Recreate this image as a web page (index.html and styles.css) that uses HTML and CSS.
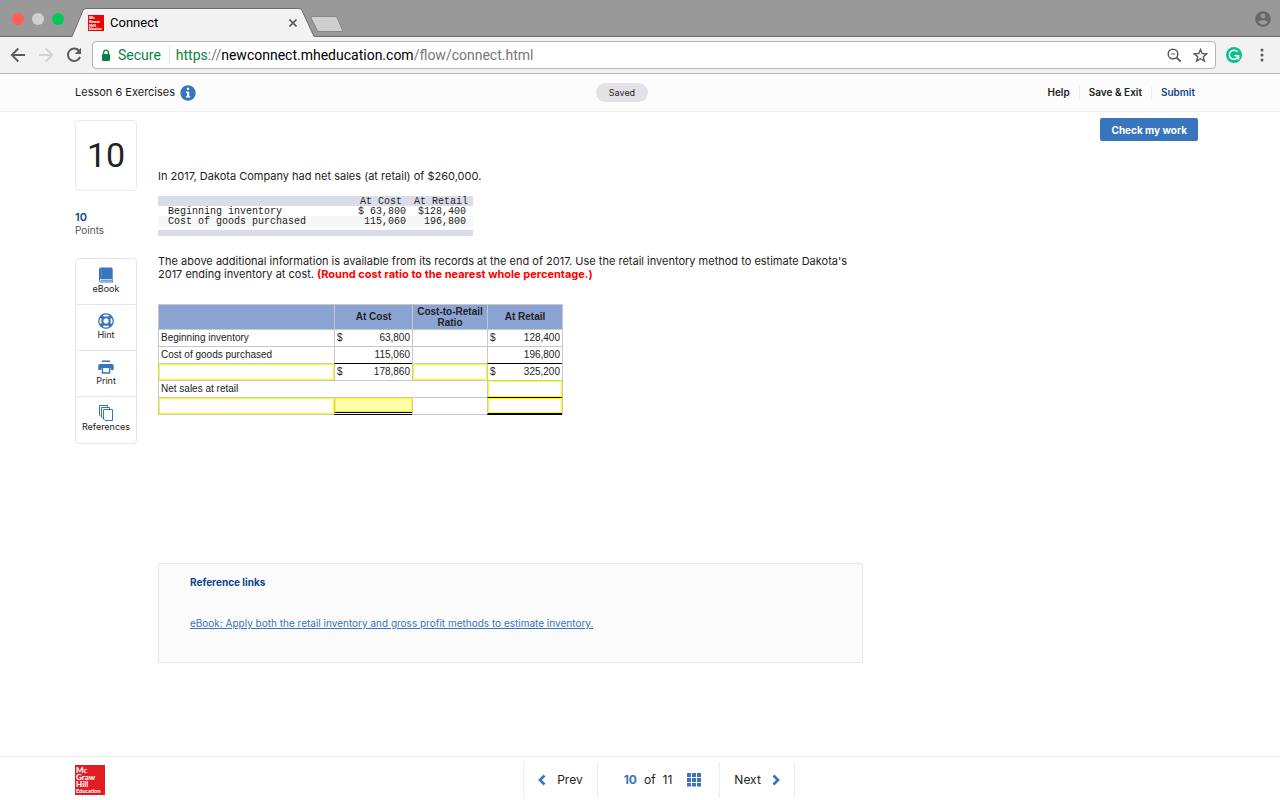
FILE: index.html
```
<!DOCTYPE html>
<html lang="en">
<head>
    <meta charset="UTF-8">
    <meta name="viewport" content="width=device-width, initial-scale=1.0">
    <title>Connect</title>
    <link rel="stylesheet" href="styles.css">
</head>
<body>
    <!-- Browser chrome -->
    <div class="tab-strip">
        <div class="lights">
            <span class="light red"></span>
            <span class="light grey"></span>
            <span class="light green"></span>
        </div>
        <div class="tab">
            <svg class="tab-shape" width="244" height="29" viewBox="0 0 244 29">
                <path d="M0 28.500L11 2.500Q12 .5 14 .5H227Q229 .5 230 2.500L242 28.500V29H0Z" fill="#f2f2f2"/>
                <path d="M0 28.500L11 2.500Q12 .5 14 .5H227Q229 .5 230 2.500L242 28.500" fill="none" stroke="#6e6e6e"/>
            </svg>
            <svg class="favicon" width="16" height="16" viewBox="0 0 16 16">
                <rect width="16" height="16" fill="#f20000"/>
                <g fill="#fff" font-family="Open Sans, sans-serif" font-weight="800" font-size="4">
                    <text x="1" y="4">Mc</text>
                    <text x="1" y="8">Graw</text>
                    <text x="1" y="12">Hill</text>
                    <text x="1" y="15" font-size="2.500">Education</text>
                </g>
            </svg>
            <span class="tab-title">Connect</span>
            <button class="icon-btn" aria-label="Close tab">
                <svg width="8" height="8" viewBox="0 0 8 8"><path d="M.5 .5L7.500 7.500M7.500 .5L.5 7.500" stroke="#5a5a5a" stroke-width="1.600"/></svg>
            </button>
        </div>
        <button class="icon-btn new-tab" aria-label="New tab">
            <svg width="34" height="17" viewBox="0 0 34 17"><path d="M2.500 .5H25Q26.500 .5 27.300 2L32.500 14Q33 15.500 31.500 15.500H9Q7.500 15.500 7 14L1 2Q.6 .5 2.500 .5Z" fill="#cfcfcf" stroke="#858585"/></svg>
        </button>
        <button class="icon-btn profile" aria-label="Profile">
            <svg width="16" height="16" viewBox="0 0 16 16"><circle cx="8" cy="8" r="7.800" fill="#676767"/><circle cx="8" cy="5" r="2.400" fill="#999"/><path d="M3.200 11C4 8.500 12 8.500 12.800 11C11.500 13 9.700 13.700 8 13.700S4.500 13 3.200 11Z" fill="#999"/></svg>
        </button>
    </div>
    <div class="toolbar">
        <button class="icon-btn" aria-label="Back">
            <svg width="16" height="16" viewBox="0 0 16 16"><path d="M15 8H2M8.300 1.500L1.800 8L8.300 14.500" fill="none" stroke="#5c5c5c" stroke-width="1.900"/></svg>
        </button>
        <button class="icon-btn" aria-label="Forward">
            <svg width="16" height="16" viewBox="0 0 16 16"><path d="M1 8H14M7.700 1.500L14.200 8L7.700 14.500" fill="none" stroke="#d2d2d2" stroke-width="1.900"/></svg>
        </button>
        <button class="icon-btn" aria-label="Reload">
            <svg width="16" height="16" viewBox="0 0 16 16"><path d="M13.200 4.200A6.200 6.200 0 1 0 14 9.800" fill="none" stroke="#5c5c5c" stroke-width="2"/><path d="M15 .8V7H8.800Z" fill="#5c5c5c"/></svg>
        </button>
        <div class="omnibox">
            <svg width="10" height="13" viewBox="0 0 10 13"><rect x="1" y="5" width="8" height="7" rx=".8" fill="#0b8043"/><path d="M2.700 5.500V3.500A2.300 2.300 0 0 1 7.300 3.500V5.500" fill="none" stroke="#0b8043" stroke-width="1.300"/></svg>
            <span class="secure">Secure</span>
            <div class="url" role="textbox" aria-label="Address"><span class="scheme">https</span><span class="dim">://</span>newconnect.mheducation.com<span class="dim">/flow/connect.html</span></div>
            <button class="icon-btn" aria-label="Zoom">
                <svg width="15" height="15" viewBox="0 0 15 15"><g fill="none" stroke="#5c5c5c"><circle cx="6" cy="6" r="4.800" stroke-width="1.500"/><path d="M9.500 9.500L13.700 13.700" stroke-width="1.900"/><path d="M3.800 6H8.200"/></g></svg>
            </button>
            <button class="icon-btn" aria-label="Bookmark">
                <svg width="15" height="15" viewBox="0 0 15 15"><path d="M7.500 1.500L9.200 5.500L13.600 5.900L10.300 8.700L11.300 13L7.500 10.700L3.700 13L4.700 8.700L1.400 5.900L5.800 5.500Z" fill="none" stroke="#5c5c5c" stroke-width="1.400"/></svg>
            </button>
        </div>
        <button class="icon-btn" aria-label="Grammarly">
            <svg width="16" height="16" viewBox="0 0 16 16"><circle cx="8" cy="8" r="8" fill="#0bc18d"/><path d="M11.500 4.800A4.600 4.600 0 1 0 12.300 9.300" fill="none" stroke="#fff" stroke-width="1.500"/><path d="M8.500 8.800H12.500V12.500" fill="none" stroke="#fff" stroke-width="1.500"/></svg>
        </button>
        <button class="icon-btn menu" aria-label="Menu">
            <svg width="4" height="14" viewBox="0 0 4 14" fill="#5c5c5c"><circle cx="2" cy="2" r="1.500"/><circle cx="2" cy="7" r="1.500"/><circle cx="2" cy="12" r="1.500"/></svg>
        </button>
    </div>

    <!-- Assignment page -->
    <header class="page-header">
        <div class="lesson">
            Lesson 6 Exercises
            <button class="icon-btn" aria-label="Assignment info">
                <svg width="16" height="16" viewBox="0 0 16 16"><circle cx="8" cy="8" r="7.700" fill="#3875bc"/><path d="M6.900 2.800H9.100V5H6.900ZM6 6.500H9.200V11.200H10.200V12.600H5.900V11.200H7V7.900H6Z" fill="#fff"/></svg>
            </button>
        </div>
        <span class="saved">Saved</span>
        <nav class="header-links">
            <a href="#">Help</a>
            <a href="#">Save &amp; Exit</a>
            <a href="#" class="submit">Submit</a>
        </nav>
    </header>

    <main class="page">
        <aside class="rail">
            <div class="question-number">10</div>
            <div class="points"><b>10</b>Points</div>
            <div class="tools">
                <a href="#">
                    <svg width="16" height="16" viewBox="0 0 16 16"><path d="M3 .5H14V12H3Q1.800 12 1.800 13.200T3 14.500H14.300V1.500H15V15.500H3Q1 15.500 1 13.500V2.500Q1 .5 3 .5Z" fill="#3875bc"/><path d="M3 13.200H14" stroke="#3875bc"/><path d="M3.500 1V12" stroke="#6b9ace" stroke-width=".6"/></svg>
                    eBook
                </a>
                <a href="#">
                    <svg width="16" height="16" viewBox="0 0 16 16"><circle cx="8" cy="8" r="5.200" fill="none" stroke="#3875bc" stroke-width="4.800"/><path d="M5.300 2.600A6 6 0 0 1 10.700 2.600M13.400 5.300A6 6 0 0 1 13.400 10.700M10.700 13.400A6 6 0 0 1 5.300 13.400M2.600 10.700A6 6 0 0 1 2.600 5.300" fill="none" stroke="#fff" stroke-width="2.600"/><circle cx="8" cy="8" r="7.200" fill="none" stroke="#3875bc" stroke-width="1.200"/><circle cx="8" cy="8" r="3.500" fill="none" stroke="#3875bc" stroke-width="1.200"/></svg>
                    Hint
                </a>
                <a href="#">
                    <svg width="16" height="16" viewBox="0 0 16 16"><path d="M4 1.500H12V3H4ZM2 5H14Q15.700 5 15.700 6.700V11H12.700V9H3.300V11H.3V6.700Q.3 5 2 5Z" fill="#3875bc"/><path d="M4.400 9V14H11.600V9" fill="none" stroke="#3875bc" stroke-width="1.400"/></svg>
                    Print
                </a>
                <a href="#">
                    <svg width="16" height="16" viewBox="0 0 16 16"><g fill="#fff" stroke="#3875bc"><path d="M1.500 .5H9.500V11.500H3L1.500 10Z"/><path d="M3.500 2.500H11.500V13.500H5L3.500 12Z"/><path d="M5.500 4.500H14.500V15.500H7L5.500 14Z"/></g></svg>
                    References
                </a>
            </div>
        </aside>

        <section class="question">
            <p>In 2017, Dakota Company had net sales (at retail) of $260,000.</p>

            <table class="facts">
                <thead>
                    <tr><th></th><th>At Cost</th><th>At Retail</th></tr>
                </thead>
                <tbody>
                    <tr><td>Beginning inventory</td><td>$ 63,800</td><td>$128,400</td></tr>
                    <tr class="stripe"><td>Cost of goods purchased</td><td>115,060</td><td>196,800</td></tr>
                </tbody>
            </table>

            <p>The above additional information is available from its records at the end of 2017. Use the retail inventory method to estimate Dakota's 2017 ending inventory at cost. <strong>(Round cost ratio to the nearest whole percentage.)</strong></p>

            <table class="answers">
                <colgroup>
                    <col class="col-label"><col class="col-cost"><col class="col-ratio"><col class="col-retail">
                </colgroup>
                <thead>
                    <tr><th></th><th>At Cost</th><th>Cost-to-Retail Ratio</th><th>At Retail</th></tr>
                </thead>
                <tbody>
                    <tr>
                        <td>Beginning inventory</td>
                        <td><div class="money"><span>$</span><span>63,800</span></div></td>
                        <td></td>
                        <td><div class="money"><span>$</span><span>128,400</span></div></td>
                    </tr>
                    <tr>
                        <td>Cost of goods purchased</td>
                        <td class="num">115,060</td>
                        <td></td>
                        <td class="num">196,800</td>
                    </tr>
                    <tr>
                        <td class="entry"><input type="text" aria-label="Total line label"></td>
                        <td class="sum"><div class="money"><span>$</span><span>178,860</span></div></td>
                        <td class="entry"><input type="text" aria-label="Cost-to-retail ratio"></td>
                        <td class="sum"><div class="money"><span>$</span><span>325,200</span></div></td>
                    </tr>
                    <tr>
                        <td colspan="3">Net sales at retail</td>
                        <td class="entry"><input type="text" aria-label="Net sales at retail"></td>
                    </tr>
                    <tr class="last">
                        <td class="entry"><input type="text" aria-label="Ending line label"></td>
                        <td class="entry active"><input type="text" aria-label="Ending inventory at cost"></td>
                        <td></td>
                        <td class="entry total sum"><input type="text" aria-label="Ending inventory at retail"></td>
                    </tr>
                </tbody>
            </table>

            <div class="references">
                <h2>Reference links</h2>
                <a href="#">eBook: Apply both the retail inventory and gross profit methods to estimate inventory.</a>
            </div>
        </section>

        <button class="check-btn">Check my work</button>
    </main>

    <footer class="page-footer">
        <svg width="30" height="30" viewBox="0 0 30 30" role="img" aria-label="McGraw Hill Education">
            <rect width="30" height="30" fill="#e31b23"/>
            <g fill="#fff" font-family="Lato, sans-serif" font-weight="900" font-size="8">
                <text x="1" y="8">Mc</text>
                <text x="1" y="15">Graw</text>
                <text x="1" y="22">Hill</text>
                <text x="1" y="28" font-size="5.500">Education</text>
            </g>
        </svg>
        <nav class="pager">
            <a href="#" class="prev">
                <svg width="8" height="12" viewBox="0 0 8 12"><path d="M6.500 1.500L2 6L6.500 10.500" fill="none" stroke="#3875bc" stroke-width="2.600"/></svg>
                Prev
            </a>
            <div class="position">
                <b>10</b><span>of</span><span>11</span>
                <button class="icon-btn" aria-label="Question list">
                    <svg width="14" height="14" viewBox="0 0 14 14" fill="#3875bc"><path d="M0 0H4V4H0ZM5 0H9V4H5ZM10 0H14V4H10ZM0 5H4V9H0ZM5 5H9V9H5ZM10 5H14V9H10ZM0 10H4V13.500H0ZM5 10H9V13.500H5ZM10 10H14V13.500H10Z"/></svg>
                </button>
            </div>
            <a href="#" class="next">
                Next
                <svg width="8" height="12" viewBox="0 0 8 12"><path d="M1.500 1.500L6 6L1.500 10.500" fill="none" stroke="#3875bc" stroke-width="2.600"/></svg>
            </a>
        </nav>
    </footer>
</body>
</html>
```
FILE: styles.css
```
* { box-sizing: border-box; }
body { font-family: Inter, "Open Sans", sans-serif; font-size: 11px; line-height: 13px; color: #222; background-color: #fff; margin: 0; display: flex; flex-direction: column; min-height: 100vh; }
a { color: inherit; text-decoration: none; }
svg { display: block; flex: none; }
.icon-btn { padding: 0; border: none; background: none; cursor: pointer; flex: none; }

/* browser tabs */
.tab-strip { display: flex; align-items: center; height: 37px; background-color: #999; border-bottom: 1px solid #6e6e6e; padding: 2px 9px 0 12px; font-family: Roboto, sans-serif; }
.lights { display: flex; gap: 8px; }
.light { width: 12px; height: 12px; border-radius: 50%; }
.red { background-color: #ff5f57; }
.grey { background-color: #d0d0d0; }
.green { background-color: #00ca56; }
.tab { position: relative; display: flex; align-items: center; align-self: flex-end; width: 244px; height: 28px; margin-left: 8px; padding: 2px 19px 0 16px; gap: 6px; }
.tab-shape { position: absolute; left: 0; top: 0; }
.favicon, .tab-title, .tab .icon-btn { position: relative; }
.tab-title { flex: 1; font-size: 13px; line-height: 16px; color: #000; }
.new-tab { margin-top: 10px; margin-left: -6px; }
.profile { margin-left: auto; }

/* address bar */
.toolbar { display: flex; align-items: center; gap: 12px; height: 37px; padding: 0 16px 0 10px; background-color: #f2f2f2; border-bottom: 1px solid #b4b4b4; font-family: Roboto, sans-serif; font-size: 14px; line-height: 18px; }
.omnibox { flex: 1; display: flex; align-items: center; height: 28px; margin: 0 -2px; padding: 0 7px 0 8px; background-color: #fff; border: 1px solid #b4b4b4; border-radius: 4px; }
.secure { color: #0b8043; margin-left: 7px; padding-right: 8px; border-right: 1px solid #e5e5e5; }
.url { flex: 1; margin-left: 6px; color: #000; }
.scheme { color: #0b8043; }
.dim { color: #777; }
.omnibox .icon-btn { margin-left: 11px; }
.menu { margin-left: 6px; }

.page-header { display: grid; grid-template-columns: 20fr auto 21fr; align-items: center; height: 38px; padding: 0 85px 0 75px; background-color: #fcfcfc; border-bottom: 1px solid #eee; }
.lesson { display: flex; align-items: center; gap: 5px; }
.saved { font-size: 9px; padding: 3px 13px; border-radius: 10px; background-color: #e4e2e6; }
.header-links { display: flex; justify-content: flex-end; font-size: 10px; font-weight: 600; }
.header-links a { padding: 0 9px; border-right: 1px solid #eee; }
.header-links a:last-child { padding-right: 0; border-right: none; }
.header-links .submit { color: #0f4587; }

.page { flex: 1; display: flex; align-items: flex-start; padding: 6px 82px 20px 75px; }
.rail { flex: none; width: 62px; margin-top: 2px; }
.question-number { display: flex; align-items: center; justify-content: center; height: 71px; border: 1px solid #eaeaea; border-radius: 4px; font-family: Roboto, sans-serif; font-size: 34px; }
.points { margin-top: 20px; font-size: 10px; line-height: 12px; color: #555; }
.points b { display: block; font-weight: 600; font-size: 11px; line-height: 13px; color: #0f4587; }
.tools { margin-top: 22px; border: 1px solid #e6e6e6; border-radius: 4px; }
.tools a { display: flex; flex-direction: column; align-items: center; height: 46px; padding-top: 8px; font-size: 9px; line-height: 12px; border-bottom: 1px solid #e6e6e6; }
.tools a:last-child { border-bottom: none; }

.question { flex: 0 1 705px; margin-left: 21px; padding-top: 52px; }
.question p { margin: 0; }
.question strong { color: #f00; }
.check-btn { margin-left: auto; height: 23px; padding: 0 11px; border: none; border-radius: 2px; background-color: #3875bc; color: #fff; font-family: inherit; font-size: 10px; font-weight: 700; cursor: pointer; }

.facts { table-layout: fixed; width: 315px; margin: 13px 0 19px; border-spacing: 0; border-bottom: 6px solid #d9dde8; padding-bottom: 3px; font-family: "Liberation Mono", monospace; font-size: 10px; line-height: 9px; }
.facts th { background-color: #d9dde8; font-weight: 400; text-align: right; padding: 1px 5px 0 0; }
.facts td { text-align: right; padding: 1px 7px 0 0; }
.facts th:first-child { width: 176px; }
.facts th:nth-child(2) { width: 77px; padding-right: 9px; }
.facts td:nth-child(2) { padding-right: 5px; }
.facts td:first-child { text-align: left; padding-left: 10px; }
.facts .stripe td { background-color: #f7f7f7; padding-bottom: 1px; }

.answers { table-layout: fixed; width: 405px; margin-top: 23px; border-spacing: 0; border-right: 1px solid #c8c8c8; font-family: "Liberation Sans", Arial, sans-serif; font-size: 10px; line-height: 11px; }
.col-label { width: 176px; }
.col-cost { width: 78px; }
.col-ratio, .col-retail { width: 75px; }
.answers th, .answers td { border: solid #c8c8c8; border-width: 1px 0 0 1px; }
.answers th { height: 25px; padding: 0 0 1px; background-color: #8ba4d4; font-weight: 700; }
.answers td { height: 17px; padding: 0 2px 1px; }
.answers .num { text-align: right; }
.answers .sum { border-top-color: #000; }
.answers .entry { padding: 0; }
.answers .last td { height: 18px; border-bottom-width: 1px; }
.money { display: flex; justify-content: space-between; }
.entry input { display: block; width: 100%; height: 16px; padding: 0 2px; border: 1px solid #ff0; border-radius: 0; background-color: #fff; font: inherit; }
.active input { height: 14px; background-color: #ffa; }
.total input { height: 15px; }
.answers .last .total { border-bottom: 2px solid #000; }
.answers .last .active { border-bottom: 3px double #000; }

.references { margin-top: 148px; height: 100px; padding: 12px 31px; background-color: #fbfbfb; border: 1px solid #e8e8e8; border-radius: 2px; font-size: 10px; }
.references h2 { margin: 0 0 28px; font-size: 10px; line-height: 13px; color: #0f4587; }
.references a { color: #3875bc; text-decoration: underline; }

.page-footer { display: grid; grid-template-columns: 1fr auto 1fr; align-items: center; height: 44px; padding: 2px 37px 0 75px; border-top: 1px solid #eee; font-size: 12px; line-height: 16px; }
.pager { display: flex; height: 36px; }
.pager > * { display: flex; align-items: center; border-left: 1px solid #eee; }
.prev { gap: 11px; padding: 0 14px; }
.position { gap: 7px; padding: 0 18px 0 26px; }
.position b { color: #3875bc; }
.position .icon-btn { margin-left: 8px; }
.pager .next { gap: 11px; padding: 0 14px; border-right: 1px solid #eee; }
```
